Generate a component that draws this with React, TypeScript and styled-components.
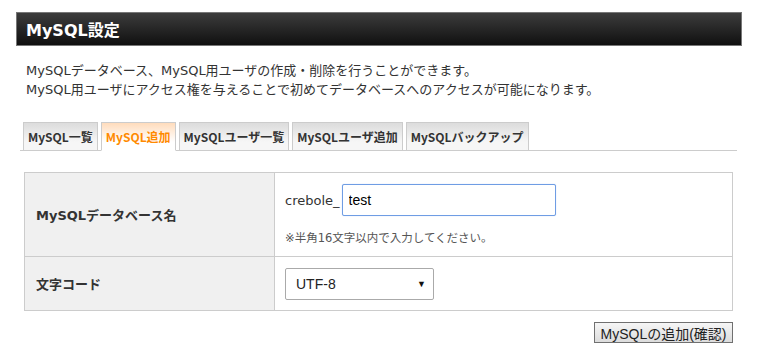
import styled, { createGlobalStyle } from 'styled-components';

const GlobalStyle = createGlobalStyle`
  body {
    margin: 0;
    background: #fff;
    font-family: "DejaVu Sans", "Noto Sans CJK JP", sans-serif;
    color: #333;
  }
`;

const tabs = ['MySQL一覧', 'MySQL追加', 'MySQLユーザ一覧', 'MySQLユーザ追加', 'MySQLバックアップ'];

export default function App() {
  return (
    <>
      <GlobalStyle />
      <Page>
        <Header>
          <HeaderTitle>MySQL設定</HeaderTitle>
        </Header>
        <Description>
          MySQLデータベース、MySQL用ユーザの作成・削除を行うことができます。
          <br />
          MySQL用ユーザにアクセス権を与えることで初めてデータベースへのアクセスが可能になります。
        </Description>
        <TabBar>
          {tabs.map((t) => (
            <Tab key={t} $active={t === 'MySQL追加'}>
              {t}
            </Tab>
          ))}
        </TabBar>
        <FormTable>
          <tbody>
            <Row>
              <LabelCell>MySQLデータベース名</LabelCell>
              <ValueCell>
                <InputLine>
                  <Prefix>crebole_</Prefix>
                  <TextInput defaultValue="test" />
                </InputLine>
                <Note>※半角16文字以内で入力してください。</Note>
              </ValueCell>
            </Row>
            <Row $short>
              <LabelCell>文字コード</LabelCell>
              <ValueCell>
                <Select>
                  <span>UTF-8</span>
                  <Arrow>▼</Arrow>
                </Select>
              </ValueCell>
            </Row>
          </tbody>
        </FormTable>
        <Actions>
          <SubmitButton>MySQLの追加(確認)</SubmitButton>
        </Actions>
      </Page>
    </>
  );
}

const Page = styled.div`
  width: 726px;
  padding: 12px 0 0 16px;
`;

const Header = styled.div`
  height: 32px;
  border: 1px solid #777;
  background: linear-gradient(to bottom, #3c3c3c, #101010);
  display: flex;
  align-items: center;
  padding-left: 9px;
`;

const HeaderTitle = styled.h1`
  margin: 0;
  font-size: 16px;
  font-weight: bold;
  color: #fff;
`;

const Description = styled.p`
  margin: 15px 0 0 10px;
  font-size: 13px;
  line-height: 19px;
  color: #333;
`;

const TabBar = styled.div`
  display: flex;
  gap: 3px;
  margin: 23px 5px 0 4px;
  padding-left: 3px;
  border-bottom: 1px solid #ccc;
`;

const Tab = styled.div<{ $active?: boolean }>`
  box-sizing: border-box;
  height: 29px;
  margin-bottom: -1px;
  padding: 0 4px;
  display: flex;
  align-items: center;
  border: 1px solid #ccc;
  border-bottom: ${(p) => (p.$active ? '1px solid #fff' : '1px solid #ccc')};
  background: ${(p) =>
    p.$active
      ? 'linear-gradient(to bottom, #ffdcbc, #fff 70%)'
      : 'linear-gradient(to bottom, #dcdcdc, #f6f6f6 70%)'};
  color: ${(p) => (p.$active ? '#ff8a00' : '#333')};
  font-family: "Noto Sans CJK JP", sans-serif;
  font-size: 12px;
  font-weight: bold;
  white-space: nowrap;
`;

const FormTable = styled.table`
  margin: 21px 0 0 8px;
  width: 709px;
  border-collapse: collapse;
  font-size: 13px;
`;

const Row = styled.tr<{ $short?: boolean }>`
  height: ${(p) => (p.$short ? '54px' : '84px')};
`;

const LabelCell = styled.th`
  width: 238px;
  padding: 0 0 0 11px;
  text-align: left;
  background: #f0f0f0;
  border: 1px solid #ccc;
  font-weight: bold;
  color: #333;
`;

const ValueCell = styled.td`
  padding: 0 0 0 10px;
  border: 1px solid #ccc;
  vertical-align: middle;
`;

const InputLine = styled.div`
  display: flex;
  align-items: center;
`;

const Prefix = styled.span`
  font-size: 13px;
  color: #333;
  margin-right: 2px;
`;

const TextInput = styled.input`
  width: 214px;
  height: 32px;
  box-sizing: border-box;
  padding: 0 6px;
  border: 1px solid #6f9de4;
  border-radius: 2px;
  box-shadow: 0 0 1px #a8c4ee;
  outline: none;
  font-family: "Liberation Sans", Arial, sans-serif;
  font-size: 14px;
  color: #000;
`;

const Note = styled.div`
  margin-top: 13px;
  font-size: 11.5px;
  color: #555;
`;

const Select = styled.div`
  width: 149px;
  height: 32px;
  box-sizing: border-box;
  display: flex;
  align-items: center;
  justify-content: space-between;
  padding: 0 7px 0 10px;
  border: 1px solid #aaa;
  border-radius: 2px;
  background: #fff;
  font-family: "Liberation Sans", Arial, sans-serif;
  font-size: 14px;
  color: #222;
`;

const Arrow = styled.span`
  font-size: 9px;
  color: #111;
`;

const Actions = styled.div`
  display: flex;
  justify-content: flex-end;
  width: 717px;
  margin-top: 11px;
`;

const SubmitButton = styled.button`
  height: 21px;
  width: 139px;
  padding: 0;
  border: 1px solid #707070;
  border-radius: 0;
  background: linear-gradient(to bottom, #f6f6f6, #dcdcdc);
  font-family: "Liberation Sans", "Noto Sans CJK JP", sans-serif;
  font-size: 14px;
  color: #222;
  white-space: nowrap;
`;
